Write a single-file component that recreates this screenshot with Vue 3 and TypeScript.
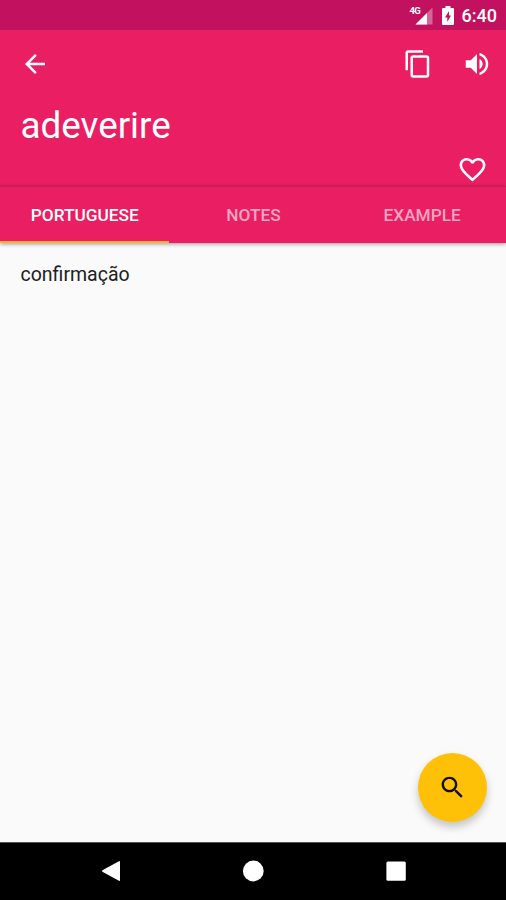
<script setup lang="ts">
import { ref } from 'vue'

const tabs: string[] = ['PORTUGUESE', 'NOTES', 'EXAMPLE']
const active = ref<number>(0)
</script>

<template>
  <div class="screen">
    <div class="status">
      <div class="signal">
        <span class="net">4G</span>
        <svg width="18" height="18" viewBox="0 0 18 18">
          <path d="M17.500 0.500V17.500H0.500z" fill="#fff" fill-opacity=".35" />
          <path d="M12 6V17.500H0.500z" fill="#fff" />
        </svg>
      </div>
      <svg class="battery" width="12" height="19" viewBox="0 0 12 19">
        <path fill="#fff" fill-rule="evenodd" d="M3.500 0h5v2H11a1 1 0 0 1 1 1v15a1 1 0 0 1-1 1H1a1 1 0 0 1-1-1V3a1 1 0 0 1 1-1h2.500zM7 5L3 11.500h2.300V16L9 9.500H7z" />
      </svg>
      <span class="clock">6:40</span>
    </div>

    <header class="header">
      <div class="toolbar">
        <svg class="icon" viewBox="0 0 24 24"><path d="M20 11H7.830l5.590-5.590L12 4l-8 8 8 8 1.410-1.410L7.830 13H20v-2z" /></svg>
        <div class="actions">
          <svg class="icon" viewBox="0 0 24 24"><path d="M16 1H4c-1.100 0-2 .9-2 2v14h2V3h12V1zm3 4H8c-1.100 0-2 .9-2 2v14c0 1.100.9 2 2 2h11c1.100 0 2-.9 2-2V7c0-1.100-.9-2-2-2zm0 16H8V7h11v14z" /></svg>
          <svg class="icon" viewBox="0 0 24 24"><path d="M3 9v6h4l5 5V4L7 9H3zm13.500 3c0-1.770-1.020-3.290-2.500-4.030v8.050c1.480-.73 2.500-2.250 2.500-4.020zM14 3.230v2.060c2.890.86 5 3.540 5 6.710s-2.110 5.850-5 6.710v2.060c4.010-.91 7-4.490 7-8.770s-2.990-7.860-7-8.770z" /></svg>
        </div>
      </div>
      <h1 class="word">adeverire</h1>
      <svg class="heart" viewBox="0 0 24 24"><path d="M16.500 3c-1.740 0-3.410.81-4.500 2.090C10.910 3.810 9.240 3 7.500 3 4.420 3 2 5.420 2 8.500c0 3.780 3.400 6.860 8.550 11.540L12 21.350l1.450-1.320C18.600 15.360 22 12.280 22 8.500 22 5.420 19.580 3 16.500 3zm-4.400 15.550l-.1.100-.1-.1C7.140 14.240 4 11.390 4 8.500 4 6.500 5.500 5 7.500 5c1.540 0 3.040.99 3.570 2.360h1.870C13.460 5.990 14.960 5 16.500 5c2 0 3.500 1.500 3.500 3.500 0 2.890-3.140 5.740-7.900 10.050z" /></svg>
    </header>

    <nav class="tabs">
      <button
        v-for="(tab, i) in tabs"
        :key="tab"
        class="tab"
        :class="{ active: active === i }"
        @click="active = i"
      >{{ tab }}</button>
    </nav>

    <main class="content">
      <p class="meaning">confirmação</p>
      <button class="fab" aria-label="Search">
        <svg class="search" viewBox="0 0 24 24"><path d="M15.500 14h-.79l-.28-.27C15.410 12.590 16 11.110 16 9.500 16 5.910 13.090 3 9.500 3S3 5.910 3 9.500 5.910 16 9.500 16c1.610 0 3.090-.59 4.230-1.570l.27.28v.79l5 4.990L20.490 19l-4.990-5zm-6 0C7.010 14 5 11.990 5 9.500S7.010 5 9.500 5 14 7.010 14 9.500 11.990 14 9.500 14z" /></svg>
      </button>
    </main>

    <footer class="navbar">
      <svg width="20" height="22" viewBox="0 0 20 22"><path d="M19.300 1.800V20.200L2.800 11z" fill="#fff" stroke="#fff" stroke-width="1.500" stroke-linejoin="round" /></svg>
      <svg width="22" height="22" viewBox="0 0 22 22"><circle cx="11.300" cy="11" r="10.400" fill="#fff" /></svg>
      <svg width="20" height="20" viewBox="0 0 20 20"><rect x=".4" y=".4" width="19.400" height="19.400" rx="1.500" fill="#fff" /></svg>
    </footer>
  </div>
</template>

<style>
body {
  margin: 0;
}
</style>

<style scoped>
.screen {
  width: 506px;
  height: 900px;
  display: flex;
  flex-direction: column;
  overflow: hidden;
  background: #fafafa;
  font-family: Roboto, sans-serif;
}
.status {
  height: 30px;
  flex: none;
  box-sizing: border-box;
  padding-right: 9px;
  display: flex;
  align-items: center;
  justify-content: flex-end;
  background: #c2125f;
  color: #fff;
}
.signal {
  position: relative;
  height: 18px;
  margin-right: 9px;
  padding-top: 1px;
}
.signal svg {
  display: block;
}
.net {
  position: absolute;
  left: -5px;
  top: 0;
  font-size: 9.5px;
  line-height: 10px;
  font-weight: 700;
  letter-spacing: -0.8px;
}
.battery {
  margin-right: 8px;
}
.clock {
  font-size: 18px;
  line-height: 30px;
  font-weight: 500;
  padding-top: 2px;
}
.header {
  height: 156px;
  flex: none;
  display: flex;
  flex-direction: column;
  background: #e91e63;
}
.toolbar {
  height: 69px;
  box-sizing: border-box;
  padding: 0 14px 0.500px 20px;
  display: flex;
  align-items: center;
  justify-content: space-between;
}
.actions {
  display: flex;
  gap: 29.500px;
}
.icon {
  display: block;
  width: 30px;
  height: 30px;
  fill: #fff;
}
.word {
  margin: 5px 0 0 20.500px;
  font-size: 36.800px;
  line-height: 44px;
  font-weight: 400;
  color: #fff;
}
.heart {
  width: 31px;
  height: 31px;
  margin: 6px 18px 0 auto;
  fill: #fff;
}
.tabs {
  position: relative;
  height: 57px;
  flex: none;
  box-sizing: border-box;
  display: grid;
  grid-template-columns: repeat(3, 1fr);
  border-top: 1px solid #cb1b59;
  background: #e91e63;
  box-shadow: 0 1px 4px rgba(0, 0, 0, 0.4);
}
.tab {
  border: 0;
  border-bottom: 2px solid transparent;
  padding: 2px 0 0 1px;
  background: none;
  font-family: inherit;
  font-size: 17.250px;
  font-weight: 500;
  color: #f8a5c1;
}
.tab.active {
  color: #fff;
  border-bottom-color: #ffb02e;
}
.content {
  flex: 1;
  display: flex;
  flex-direction: column;
  justify-content: space-between;
}
.meaning {
  margin: 20px 20.500px 0;
  font-size: 19.500px;
  line-height: 24px;
  color: #212121;
}
.fab {
  width: 69px;
  height: 69px;
  margin: 0 19px 20px auto;
  padding: 0;
  border: 0;
  border-radius: 50%;
  display: flex;
  align-items: center;
  justify-content: center;
  background: #ffc107;
  box-shadow: 0 5px 9px rgba(0, 0, 0, 0.22);
}
.search {
  width: 29px;
  height: 29px;
  fill: #111;
}
.navbar {
  height: 58.500px;
  flex: none;
  box-sizing: border-box;
  padding: 0 100px 0.500px 100px;
  border-top: 1px solid #555;
  display: flex;
  align-items: center;
  justify-content: space-between;
  background: #000;
}
</style>
